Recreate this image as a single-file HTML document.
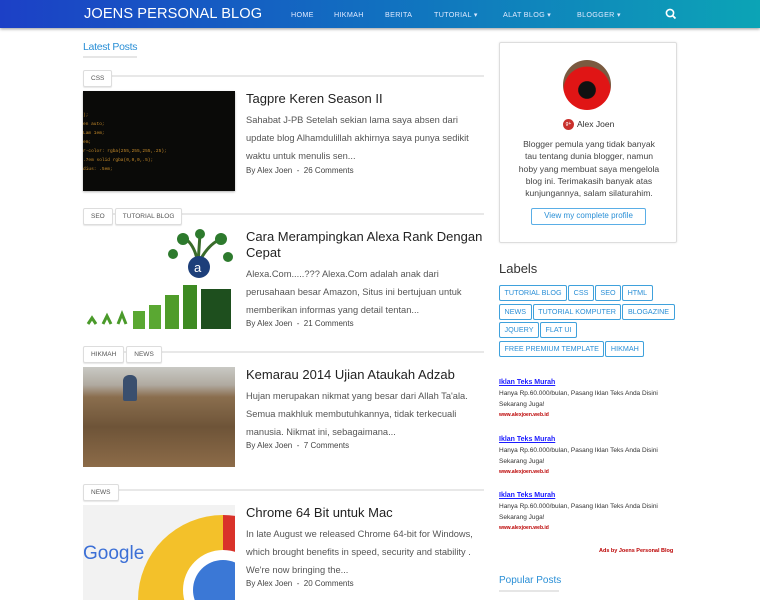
<!DOCTYPE html>
<html><head><style>
*{margin:0;padding:0;box-sizing:border-box}
html,body{width:760px;height:600px;overflow:hidden}
body{background:#fff;font-family:"Liberation Sans",sans-serif;position:relative}
.hdr{position:absolute;left:0;top:0;width:760px;height:28px;background:linear-gradient(90deg,#1c40c6,#1170c0 50%,#0ca4b6);box-shadow:0 1px 3px rgba(0,0,0,.4)}
.logo{position:absolute;left:84px;top:6px;color:#fff;font-size:14.6px;letter-spacing:.1px}
.nav{position:absolute;top:10px;color:#dfe9ff;font-size:7.2px;letter-spacing:.3px}
.a{position:absolute}
.lp{left:83px;top:41px;color:#2a8fd6;font-size:10.5px;letter-spacing:-.3px}
.lpl{left:83px;top:56px;width:54px;height:2px;background:#e6e6e6}
.tagrow{position:absolute;left:83px;width:401px;height:18px}
.tagrow .ln{position:absolute;left:0;right:0;top:8px;height:2px;background:#e8e8e8}
.tag{position:relative;display:inline-block;background:#fff;border:1px solid #ddd;border-radius:2px;font-size:6.5px;color:#555;height:17px;line-height:15px;padding:0 7px;margin-right:2px;box-shadow:0 1px 1px rgba(0,0,0,.1)}
.img{position:absolute;left:83px;width:152px;height:100px;overflow:hidden}
.tt{position:absolute;left:246px;font-size:13px;color:#222;line-height:16px;width:240px}
.ex{position:absolute;left:246px;font-size:9.3px;color:#555;line-height:18px;width:242px}
.by{position:absolute;left:246px;font-size:8px;color:#444}
.card{left:499px;top:42px;width:178px;height:201px;border:1px solid #ddd;border-radius:2px;box-shadow:0 0 2px rgba(0,0,0,.1)}
.lbl{display:inline-block;border:1.5px solid #3fa1dc;border-radius:2px;color:#2a8fd6;font-size:7.2px;height:16px;line-height:13px;padding:0 4.5px;margin:0 1px 2.5px 0}
.ad{position:absolute;left:499px;font-size:6.5px;color:#333;line-height:11px}
.ad b{display:block;color:#1a1aff;text-decoration:underline;font-size:7px}
.ad i{display:block;font-style:normal;color:#b00;font-size:5px;font-weight:bold}
</style></head><body>
<div class="hdr">
<div class="logo">JOENS PERSONAL BLOG</div>
<div class="nav" style="left:291px">HOME</div>
<div class="nav" style="left:334px">HIKMAH</div>
<div class="nav" style="left:385px">BERITA</div>
<div class="nav" style="left:434px">TUTORIAL &#9662;</div>
<div class="nav" style="left:503px">ALAT BLOG &#9662;</div>
<div class="nav" style="left:577px">BLOGGER &#9662;</div>
<svg class="a" style="left:665px;top:8px" width="12" height="12" viewBox="0 0 12 12"><circle cx="5" cy="5" r="3.6" fill="none" stroke="#fff" stroke-width="1.6"/><path d="M7.6 7.6L10.5 10.5" stroke="#fff" stroke-width="1.8"/></svg>
</div>

<div class="a lp">Latest Posts</div><div class="a lpl"></div>

<div class="tagrow" style="top:67px"><div class="ln"></div><span class="tag">CSS</span></div>
<div class="img" style="top:91px;background:#0a0a08;box-shadow:0 1px 2px rgba(0,0,0,.3)">
<div style="position:absolute;left:0;top:20px;font-family:'Liberation Mono',monospace;font-size:4.5px;color:#c58a2a;line-height:9px">);<br>en auto;<br>Lam 1em;<br>em;<br>r-color: rgba(255,255,255,.25);<br>.7em solid rgba(0,0,0,.5);<br>dius: .5em;</div></div>
<div class="tt" style="top:91px">Tagpre Keren Season II</div>
<div class="ex" style="top:111px">Sahabat J-PB Setelah sekian lama saya absen dari update blog Alhamdulillah akhirnya saya punya sedikit waktu untuk menulis sen...</div>
<div class="by" style="top:166px">By Alex Joen &nbsp;-&nbsp; 26 Comments</div>

<div class="tagrow" style="top:205px"><div class="ln"></div><span class="tag">SEO</span><span class="tag">TUTORIAL BLOG</span></div>
<div class="img" style="top:229px">
<svg width="152" height="100" viewBox="0 0 152 100"><path d="M115 35 Q112 15 100 8 M115 35 Q125 15 138 10 M115 35 L117 5" stroke="#3a6b2a" stroke-width="3" fill="none"/><circle cx="100" cy="10" r="6" fill="#2d7a2d"/><circle cx="138" cy="10" r="6" fill="#2d7a2d"/><circle cx="117" cy="5" r="5" fill="#2d7a2d"/><circle cx="90" cy="25" r="5" fill="#2d7a2d"/><circle cx="145" cy="28" r="5" fill="#2d7a2d"/><circle cx="116" cy="38" r="11" fill="#1d3f7a"/><text x="111" y="43" font-size="13" fill="#fff">a</text><rect x="50" y="82" width="12" height="18" fill="#5aa832"/><rect x="66" y="76" width="12" height="24" fill="#5aa832"/><rect x="82" y="66" width="14" height="34" fill="#4f9c2a"/><rect x="100" y="56" width="14" height="44" fill="#3d8a22"/><rect x="118" y="60" width="30" height="40" fill="#1e4f1e"/><path d="M5 95l4-6 4 6M20 95l4-8 4 8M35 95l4-10 4 10" stroke="#4a9a2a" stroke-width="3" fill="none"/></svg></div>
<div class="tt" style="top:229px">Cara Merampingkan Alexa Rank Dengan Cepat</div>
<div class="ex" style="top:265px">Alexa.Com.....??? Alexa.Com adalah anak dari perusahaan besar Amazon, Situs ini bertujuan untuk memberikan informas yang detail tentan...</div>
<div class="by" style="top:319px">By Alex Joen &nbsp;-&nbsp; 21 Comments</div>

<div class="tagrow" style="top:343px"><div class="ln"></div><span class="tag">HIKMAH</span><span class="tag">NEWS</span></div>
<div class="img" style="top:367px;background:linear-gradient(180deg,#c9c9c4 0,#b0aaa0 18%,#8a6e4e 30%,#6e5438 60%,#8c6b48 100%)">
<div style="position:absolute;left:40px;top:8px;width:14px;height:26px;background:#3a4f6e;border-radius:6px 6px 2px 2px"></div></div>
<div class="tt" style="top:367px">Kemarau 2014 Ujian Ataukah Adzab</div>
<div class="ex" style="top:387px">Hujan merupakan nikmat yang besar dari Allah Ta'ala. Semua makhluk membutuhkannya, tidak terkecuali manusia. Nikmat ini, sebagaimana...</div>
<div class="by" style="top:441px">By Alex Joen &nbsp;-&nbsp; 7 Comments</div>

<div class="tagrow" style="top:481px"><div class="ln"></div><span class="tag">NEWS</span></div>
<div class="img" style="top:505px;height:95px;background:#f2f2f2">
<div style="position:absolute;left:55px;top:10px;width:170px;height:170px;border-radius:50%;background:conic-gradient(#d9322a 0 120deg,#3a9a3e 120deg 240deg,#f3c12a 240deg 360deg)"></div>
<div style="position:absolute;left:100px;top:45px;width:80px;height:80px;border-radius:50%;background:#fff"></div>
<div style="position:absolute;left:110px;top:55px;width:60px;height:60px;border-radius:50%;background:#3b78d6"></div>
<div style="position:absolute;left:0;top:38px;font-size:19px;color:#3b6fd6">Google</div></div>
<div class="tt" style="top:505px">Chrome 64 Bit untuk Mac</div>
<div class="ex" style="top:525px">In late August we released Chrome 64-bit for Windows, which brought benefits in speed, security and stability . We're now bringing the...</div>
<div class="by" style="top:579px">By Alex Joen &nbsp;-&nbsp; 20 Comments</div>

<div class="a card">
<div class="a" style="left:63px;top:17px;width:48px;height:50px;border-radius:50%;background:radial-gradient(circle at 50% 60%,#111 0 22%,#e01515 24% 60%,#7a5a40 62%)"></div>
<div class="a" style="left:63px;top:76px;width:11px;height:11px;border-radius:50%;background:#c9302c;color:#fff;font-size:5px;text-align:center;line-height:11px">g+</div>
<div class="a" style="left:77px;top:76px;font-size:8.5px;color:#333">Alex Joen</div>
<div class="a" style="left:0;top:95px;width:178px;text-align:center;font-size:8.6px;color:#444;line-height:12.3px;white-space:nowrap">Blogger pemula yang tidak banyak<br>tau tentang dunia blogger, namun<br>hoby yang membuat saya mengelola<br>blog ini. Terimakasih banyak atas<br>kunjungannya, salam silaturahim.</div>
<div class="a" style="left:31px;top:165px;width:115px;height:17px;border:1.5px solid #5aaee6;border-radius:2px;color:#2a8fd6;font-size:8px;text-align:center;line-height:14px">View my complete profile</div>
</div>

<div class="a" style="left:499px;top:261px;font-size:13px;color:#333">Labels</div>
<div class="a" style="left:499px;top:285px;width:185px;line-height:0">
<span class="lbl">TUTORIAL BLOG</span><span class="lbl">CSS</span><span class="lbl">SEO</span><span class="lbl">HTML</span><span class="lbl">NEWS</span><span class="lbl">TUTORIAL KOMPUTER</span><span class="lbl">BLOGAZINE</span><span class="lbl">JQUERY</span><span class="lbl">FLAT UI</span><span class="lbl">FREE PREMIUM TEMPLATE</span><span class="lbl">HIKMAH</span>
</div>

<div class="ad" style="top:377px"><b>Iklan Teks Murah</b>Hanya Rp.60.000/bulan, Pasang Iklan Teks Anda Disini<br>Sekarang Juga!<i>www.alexjoen.web.id</i></div>
<div class="ad" style="top:434px"><b>Iklan Teks Murah</b>Hanya Rp.60.000/bulan, Pasang Iklan Teks Anda Disini<br>Sekarang Juga!<i>www.alexjoen.web.id</i></div>
<div class="ad" style="top:490px"><b>Iklan Teks Murah</b>Hanya Rp.60.000/bulan, Pasang Iklan Teks Anda Disini<br>Sekarang Juga!<i>www.alexjoen.web.id</i></div>
<div class="a" style="left:599px;top:548px;font-size:5.5px;color:#b00;font-weight:bold">Ads by Joens Personal Blog</div>
<div class="a" style="left:499px;top:575px;font-size:10px;color:#2a8fd6">Popular Posts</div>
<div class="a" style="left:499px;top:590px;width:60px;height:2px;background:#e6e6e6"></div>
</body></html>
